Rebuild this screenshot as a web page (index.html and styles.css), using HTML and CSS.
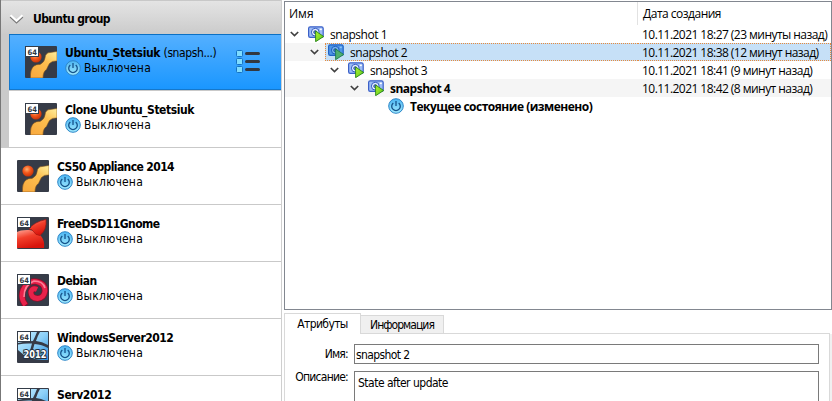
FILE: index.html
```html
<!DOCTYPE html>
<html lang="ru">
<head>
<meta charset="utf-8">
<title>VirtualBox</title>
<link rel="stylesheet" href="styles.css">
</head>
<body>
<svg class="defs" aria-hidden="true">
  <defs>
    <linearGradient id="gOrange" x1="1" y1="0" x2="0.3" y2="1"><stop offset="0" stop-color="#fff0a0"/><stop offset=".45" stop-color="#fdc050"/><stop offset="1" stop-color="#f9ac40"/></linearGradient>
    <radialGradient id="gBall" cx=".4" cy=".35" r=".65"><stop offset="0" stop-color="#ffb070"/><stop offset=".5" stop-color="#f4591c"/><stop offset="1" stop-color="#c93408"/></radialGradient>
    <linearGradient id="gRed" x1="0" y1="0" x2=".4" y2="1"><stop offset="0" stop-color="#ffa798"/><stop offset=".45" stop-color="#f2402c"/><stop offset="1" stop-color="#d8140c"/></linearGradient>
    <linearGradient id="gPower" x1="0" y1="0" x2="0" y2="1"><stop offset="0" stop-color="#4ab4f2"/><stop offset="1" stop-color="#a4ecff"/></linearGradient>
    <linearGradient id="gGlass" x1="0" y1="0" x2="1" y2="1"><stop offset="0" stop-color="#c8efff"/><stop offset=".5" stop-color="#8dd0f8"/><stop offset="1" stop-color="#2d8edb"/></linearGradient>
    <linearGradient id="gPlay" x1="0" y1="0" x2="1" y2="1"><stop offset="0" stop-color="#b6f531"/><stop offset="1" stop-color="#52c41c"/></linearGradient>
    <symbol id="bits" viewBox="0 0 32 32"><rect x=".5" y=".5" width="13" height="10" fill="#fff" stroke="#343c48"/><text class="bits" x="2.500" y="8.500" textLength="9.500" lengthAdjust="spacingAndGlyphs">64</text></symbol>
    <symbol id="other" viewBox="0 0 32 32"><rect width="32" height="32" rx="1" fill="#363b47"/><circle cx="11" cy="11" r="5.600" fill="url(#gBall)"/><path d="M32 5.500V15Q27 14.500 24.500 17.500Q23 20 21.500 23.500Q18 25.500 18 32H5.500Q5 23 9 20Q11.500 18 15 18.500Q19.500 16 20 12Q20.500 6.500 25 6.500Z" fill="url(#gOrange)" stroke="#80521f" stroke-width=".6"/></symbol>
    <symbol id="bsd" viewBox="0 0 32 32"><rect width="32" height="32" rx="1" fill="#363b47"/><path d="M0 15Q3 13 10 13Q18 12 24 19Q28 24 27 31H0Z" fill="url(#gRed)"/><path d="M12 12Q17 5 29 2.500Q30 13 23 18.500Q18 18 17 15Q15 12 12 12Z" fill="url(#gRed)" stroke="#a51610" stroke-width=".7"/></symbol>
    <symbol id="debian" viewBox="0 0 32 32"><rect width="32" height="32" rx="1" fill="#363b47"/><path d="M9 32Q3 24 6 16Q11 6 19 7.500Q28 9 28 17Q27 24 20.500 24.500Q13.500 24 14 17.500Q16 13.500 20 15.500" fill="none" stroke="#8e0e2a" stroke-width="6.300"/><path d="M8.500 31Q3 24 6 16Q11 6 19 7.500Q28 9 28 17Q27 24 20.500 24.500Q13.500 24 14 17.500Q16 13.500 20 15.500" fill="none" stroke="#e8224a" stroke-width="4.800"/><path d="M7 23Q7 11 17 7Q26 7 28 14" fill="none" stroke="#fb8299" stroke-width="1.600"/></symbol>
    <symbol id="win" viewBox="0 0 32 32"><rect width="32" height="32" rx="1" fill="#363b47"/><path d="M1 1H20Q18 6 16 10Q8 10 1 12ZM23 1H31V14Q25 10.500 19 10Q20.500 5 23 1ZM1 13.500Q8 12 15 12.500Q12.500 20 12 27Q6 24 1 19ZM17.500 13Q25 13.500 31 17V29Q20 29 14.500 27Q15 20 17.500 13Z" fill="url(#gGlass)"/></symbol>
    <symbol id="power" viewBox="0 0 16 16"><circle cx="8" cy="8" r="7.300" fill="url(#gPower)" stroke="#2d86c8" stroke-width="1"/><path d="M5.300 4.900A4.300 4.300 0 1 0 10.700 4.900M8 3V8" fill="none" stroke="#15528a" stroke-width="1.300"/></symbol>
    <symbol id="snap" viewBox="0 0 16 16"><rect x=".6" y=".8" width="14.600" height="10.600" rx="1.600" fill="#9dbcf5" stroke="#3b60c8" stroke-width="1.200"/><circle cx="7.300" cy="6.200" r="3.900" fill="#e4eeff" stroke="#3159c4"/><circle cx="7.300" cy="6.200" r="1.600" fill="#5a82cf" stroke="#28478f" stroke-width=".7"/><rect x="11.800" y="2.600" width="2" height="1.500" fill="#fff"/><path d="M7.600 5L15.700 10.500L7.600 15.700Z" fill="url(#gPlay)" stroke="#288318" stroke-width=".9"/></symbol>
    <symbol id="snapsel" viewBox="0 0 16 16"><rect x=".6" y=".8" width="14.600" height="10.600" rx="1.600" fill="#4f97e6" stroke="#1f62c6" stroke-width="1.200"/><circle cx="7.300" cy="6.200" r="3.900" fill="#79b4ee" stroke="#1c5cc0"/><circle cx="7.300" cy="6.200" r="1.600" fill="#3478cb" stroke="#1a4c97" stroke-width=".7"/><rect x="11.800" y="2.600" width="2" height="1.500" fill="#8cc4f5"/><path d="M7.600 5L15.700 10.500L7.600 15.700Z" fill="#4fb070" stroke="#1e7a50" stroke-width=".9"/></symbol>
    <symbol id="chev" viewBox="0 0 9 6"><path d="M.8 1L4.500 4.500L8.200 1" fill="none" stroke="#404040" stroke-width="1.700"/></symbol>
  </defs>
</svg>
<div class="app">
  <aside class="machines">
    <header class="group-head">
      <svg class="group-arrow" viewBox="0 0 16 10"><path d="M1.500 2.500L7.500 8L13.500 2.500" fill="none" stroke="#777" stroke-width="2.500"/><path d="M1.500 1.300L7.500 6.800L13.500 1.300" fill="none" stroke="#fff" stroke-width="2.200"/></svg>
      <b class="w-group">Ubuntu group</b>
    </header>
    <div class="group-body">
      <div class="vm selected">
        <svg class="os" viewBox="0 0 32 32"><use href="#other"/><use href="#bits"/></svg>
        <div class="info"><div class="name"><b class="w-ubuntu">Ubuntu_Stetsiuk</b> <span class="snapname">(snapsh...)</span></div><div class="state"><svg class="ico"><use href="#power"/></svg><span>Выключена</span></div></div>
        <svg class="menu" viewBox="0 0 24 24"><g fill="#7fdcff" stroke="#1572c4"><rect x=".5" y=".5" width="6" height="6" rx="1"/><rect x=".5" y="8.500" width="6" height="6" rx="1"/><rect x=".5" y="16.500" width="6" height="6" rx="1"/></g><path d="M10.500 3.500H22.500M10.500 11.500H22.500M10.500 19.500H22.500" stroke="#333840" stroke-width="3" stroke-linecap="round"/></svg>
      </div>
      <div class="vm">
        <svg class="os" viewBox="0 0 32 32"><use href="#other"/><use href="#bits"/></svg>
        <div class="info"><div class="name"><b class="w-clone">Clone Ubuntu_Stetsiuk</b></div><div class="state"><svg class="ico"><use href="#power"/></svg><span>Выключена</span></div></div>
      </div>
    </div>
    <div class="vm">
      <svg class="os" viewBox="0 0 32 32"><use href="#other"/></svg>
      <div class="info"><div class="name"><b class="w-cs">CS50 Appliance 2014</b></div><div class="state"><svg class="ico"><use href="#power"/></svg><span>Выключена</span></div></div>
    </div>
    <div class="vm">
      <svg class="os" viewBox="0 0 32 32"><use href="#bsd"/><use href="#bits"/></svg>
      <div class="info"><div class="name"><b>FreeDSD11Gnome</b></div><div class="state"><svg class="ico"><use href="#power"/></svg><span>Выключена</span></div></div>
    </div>
    <div class="vm">
      <svg class="os" viewBox="0 0 32 32"><use href="#debian"/><use href="#bits"/></svg>
      <div class="info"><div class="name"><b>Debian</b></div><div class="state"><svg class="ico"><use href="#power"/></svg><span>Выключена</span></div></div>
    </div>
    <div class="vm">
      <svg class="os" viewBox="0 0 32 32"><use href="#win"/><use href="#bits"/><text class="year" x="6.500" y="27.300" textLength="23" lengthAdjust="spacingAndGlyphs">2012</text></svg>
      <div class="info"><div class="name"><b>WindowsServer2012</b></div><div class="state"><svg class="ico"><use href="#power"/></svg><span>Выключена</span></div></div>
    </div>
    <div class="vm last">
      <svg class="os" viewBox="0 0 32 32"><use href="#win"/><use href="#bits"/></svg>
      <div class="info"><div class="name"><b class="w-serv">Serv2012</b></div></div>
    </div>
  </aside>
  <main class="details">
    <section class="tree">
      <div class="tree-head"><span class="col-name">Имя</span><span class="col-date">Дата создания</span></div>
      <div class="row"><div class="cell"><svg class="chev"><use href="#chev"/></svg><svg class="ico"><use href="#snap"/></svg><span class="label">snapshot 1</span></div><div class="date">10.11.2021 18:27 (23 минуты назад)</div></div>
      <div class="row alt"><div class="cell l1"><svg class="chev"><use href="#chev"/></svg><div class="mark"><svg class="ico"><use href="#snapsel"/></svg><span class="label">snapshot 2</span></div></div><div class="date mark">10.11.2021 18:38 (12 минут назад)</div></div>
      <div class="row"><div class="cell l2"><svg class="chev"><use href="#chev"/></svg><svg class="ico"><use href="#snap"/></svg><span class="label">snapshot 3</span></div><div class="date">10.11.2021 18:41 (9 минут назад)</div></div>
      <div class="row alt"><div class="cell l3"><svg class="chev"><use href="#chev"/></svg><svg class="ico"><use href="#snap"/></svg><b class="label">snapshot 4</b></div><div class="date">10.11.2021 18:42 (8 минут назад)</div></div>
      <div class="row"><div class="cell l4"><span class="chev"></span><svg class="ico"><use href="#power"/></svg><b class="label">Текущее состояние (изменено)</b></div></div>
    </section>
    <nav class="tabs"><div class="tab active"><span>Атрибуты</span></div><div class="tab"><span>Информация</span></div><div class="rule"></div></nav>
    <section class="pane">
      <div class="field"><label>Имя:</label><div class="input">snapshot 2</div></div>
      <div class="field fill"><label class="l-desc">Описание:</label><div class="input area">State after update</div></div>
    </section>
  </main>
</div>
</body>
</html>
```
FILE: styles.css
```css
* { box-sizing: border-box; }
html, body { margin: 0; height: 401px; overflow: hidden; }
body { background: #fff; color: #000; font: 12px/15px "DejaVu Sans Condensed", "DejaVu Sans", sans-serif; font-stretch: condensed; }
.defs { position: absolute; width: 0; height: 0; }
svg { display: block; flex: none; }
b, span, .date { white-space: nowrap; }
.app { display: flex; width: 832px; height: 401px; }
.ico { width: 16px; height: 16px; }

.machines { width: 282px; flex: none; border-left: 1px solid #777; border-right: 1px solid #cfcfcf; overflow: hidden; }
.machines b { letter-spacing: -.52px; }
.machines .w-group { letter-spacing: -.62px; }
.machines .w-ubuntu { letter-spacing: -.36px; }
.machines .w-clone { letter-spacing: -.45px; }
.machines .w-cs { letter-spacing: -.6px; }
.machines .w-serv { letter-spacing: -.4px; }
.snapname { letter-spacing: -.4px; }
.group-head { height: 34px; padding: 3px 0 0 8px; display: flex; align-items: center; border-top: 1px solid #c8c8c8; background: linear-gradient(#e4e4e4, #cbcbcb); }
.group-arrow { width: 16px; height: 10px; margin-right: 8px; }
.group-body { padding-left: 8px; background: #cacaca; }
.vm { height: 57px; padding: 12px 0 0 16px; display: flex; background: #fff; border-bottom: 1px solid #c9c9c9; }
.vm.last { height: 25px; border: 0; overflow: hidden; }
.vm.selected { background: linear-gradient(#55b0ff, #1996ff); box-shadow: inset 0 1px #0b70c4, inset 1px 0 #1578cc, inset 0 -1px #1578cc; }
.os { width: 32px; height: 32px; margin-right: 8px; }
.info { width: 171px; }
.name { height: 15px; white-space: nowrap; }
.state { display: flex; align-items: center; gap: 3px; height: 16px; margin-top: -1px; letter-spacing: .2px; }
.menu { width: 24px; height: 24px; margin-top: 4px; }
.bits { font: bold 7.500px "DejaVu Sans", sans-serif; fill: #303640; }
.year { font: bold 10px "DejaVu Sans Condensed", sans-serif; fill: #fff; stroke: #25303c; stroke-width: 2px; paint-order: stroke; }

.details { flex: 1; min-width: 0; padding: 1px 0 0 2px; display: flex; flex-direction: column; }
.tree { height: 309px; flex: none; border: 1px solid #828790; font: 12px/20px "Open Sans", "Noto Sans", sans-serif; letter-spacing: -.45px; }
.tree b { letter-spacing: -.5px; }
.tree-head { display: flex; height: 23px; line-height: 24px; }
.col-name { width: 353px; padding-left: 4px; border-right: 1px solid #e2e2e2; letter-spacing: 0; }
.col-date { padding-left: 5px; letter-spacing: -.5px; }
.row { display: flex; height: 18px; }
.row.alt { background: #f5f5f5; }
.cell { width: 353px; flex: none; padding-left: 5px; display: flex; align-items: center; }
.cell .ico { margin-right: 6px; }
.label { padding-top: 2px; }
.l1 { padding-left: 25px; }
.l2 { padding-left: 45px; }
.l3 { padding-left: 65px; }
.l4 { padding-left: 85px; }
.chev { width: 9px; height: 6px; margin-right: 9px; }
.date { flex: 1; min-width: 0; padding-left: 4px; letter-spacing: -.54px; }
.mark { background: #c6e0f7; border: dotted #e88a3c; border-width: 1px 0; line-height: 18px; height: 18px; }
.cell .mark { flex: 1; display: flex; align-items: center; margin-left: -3px; padding-left: 2px; border-left-width: 1px; }
.date.mark { border-right-width: 1px; }

.tabs { display: flex; align-items: flex-end; height: 24px; flex: none; padding-top: 3px; }
.tab { height: 19px; width: 83px; text-align: center; background: #f0f0f0; border: 1px solid #d9d9d9; border-left: 0; line-height: 18px; letter-spacing: -.95px; }
.tab.active { height: 21px; width: 77px; background: #fff; border-left: 1px solid #d9d9d9; border-bottom: 0; line-height: 20px; letter-spacing: -.6px; }
.rule { flex: 1; margin-right: 2px; border-bottom: 1px solid #d9d9d9; }
.pane { flex: 1; min-height: 0; border: solid #d9d9d9; border-width: 0 1px; margin-right: 2px; padding: 10px 10px 0 9px; box-shadow: 2px 0 #f0f0f0; display: flex; flex-direction: column; }
.field { display: flex; margin-bottom: 6px; }
.field.fill { flex: 1; margin-bottom: 0; }
.field label { width: 60px; display: flex; justify-content: flex-end; padding-right: 6px; line-height: 21px; white-space: nowrap; letter-spacing: -.75px; }
.field .l-desc { line-height: 13px; }
.input { flex: 1; height: 20px; border: 1px solid #7a7a7a; line-height: 20px; padding-left: 1px; letter-spacing: -.6px; }
.area { height: auto; border-bottom: 0; padding-left: 3px; letter-spacing: -.5px; line-height: 22px; }
```
